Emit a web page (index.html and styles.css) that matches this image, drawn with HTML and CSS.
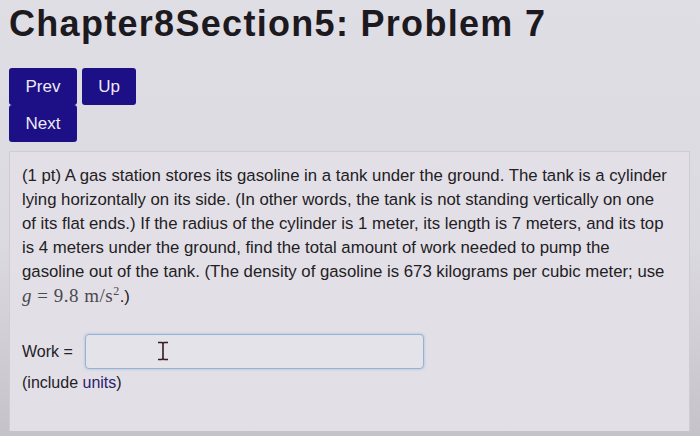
FILE: index.html
```html
<!DOCTYPE html>
<html lang="en">
  <head>
    <meta charset="UTF-8" />
    <meta name="viewport" content="width=device-width, initial-scale=1.0" />
    <title>Chapter8Section5: Problem 7</title>
    <link rel="stylesheet" href="styles.css">
  </head>
  <body>
    <h1 class="page-title">Chapter8Section5: Problem 7</h1>

    <!-- navigation buttons -->
    <div class="nav">
      <div class="nav-row">
        <a class="nav-btn prev" href="#">Prev</a>
        <a class="nav-btn up" href="#">Up</a>
      </div>
      <div class="nav-row">
        <a class="nav-btn prev" href="#">Next</a>
      </div>
    </div>

    <div class="problem">
      <p class="problem-text">
        (1 pt) A gas station stores its gasoline in a tank under the ground. The tank is a cylinder<br>
        lying horizontally on its side. (In other words, the tank is not standing vertically on one<br>
        of its flat ends.) If the radius of the cylinder is 1 meter, its length is 7 meters, and its top<br>
        is 4 meters under the ground, find the total amount of work needed to pump the<br>
        gasoline out of the tank. (The density of gasoline is 673 kilograms per cubic meter; use<br>
        <span class="math"><i>g</i> = 9.8 m/s<sup>2</sup></span>.)
      </p>

      <div class="answer-row">
        <label for="work">Work =</label>
        <div class="input-wrap">
          <input id="work" class="answer" type="text" />
          <svg class="ibeam" width="12" height="20" viewBox="0 0 12 20">
            <path d="M1 1.5h4l1 1 1-1h4M6 2.5v15M1 18.5h4l1-1 1 1h4" fill="none" stroke="#3a1a20" stroke-width="1.6"/>
          </svg>
        </div>
      </div>
      <p class="hint">(include <a href="#">units</a>)</p>
    </div>
  </body>
</html>
```

FILE: styles.css
```css
/* page */
body {
  margin: 0;
  padding: 0 10px 0 9px;
  font-family: "Liberation Sans", Arial, sans-serif;
  color: #232127;
  background: linear-gradient(180deg, #e0dee5 0%, #dcdae1 55%, #c6c2ca 100%);
  min-height: 436px;
  box-sizing: border-box;
}
.page-title {
  margin: 0;
  padding-top: 3px;
  font-size: 36px;
  font-weight: bold;
  color: #1c1a1e;
  letter-spacing: 1.3px;
  white-space: nowrap;
}

/* nav buttons */
.nav {
  margin-top: 23px;
}
.nav-row {
  display: flex;
  gap: 5px;
}
.nav-btn {
  display: flex;
  align-items: center;
  justify-content: center;
  height: 37px;
  background-color: #1d0f86;
  color: #ecebf4;
  text-decoration: none;
  font-size: 17px;
  border-radius: 3px;
}
.prev {
  width: 68px;
}
.up {
  width: 54px;
}

/* problem box */
.problem {
  margin-top: 9px;
  padding: 12px 12px 39px 12px;
  background-color: #e2e0e6;
  border: 1px solid #cfcdd3;
  border-bottom: none;
}
.problem-text {
  margin: 0;
  font-size: 16.75px;
  line-height: 24px;
  color: #222024;
  white-space: nowrap;
}
.math {
  font-family: "Liberation Serif", "Times New Roman", serif;
  font-size: 19px;
  color: #4a4850;
  letter-spacing: 0.5px;
}
.math sup {
  font-size: 12px;
  line-height: 0;
}

/* answer */
.answer-row {
  display: flex;
  align-items: center;
  gap: 12px;
  margin-top: 25px;
  font-size: 16px;
}
.input-wrap {
  position: relative;
}
.answer {
  display: block;
  width: 339px;
  height: 35px;
  box-sizing: border-box;
  border: 1px solid #94b4d6;
  border-radius: 4px;
  background-color: #e4e3ea;
  box-shadow: 0 0 3px rgba(110, 150, 210, 0.5);
}
.ibeam {
  position: absolute;
  left: 72px;
  top: 7px;
}
.hint {
  margin: 5px 0 0 0;
  font-size: 16px;
}
.hint a {
  color: #2a2170;
  text-decoration: none;
}
```
